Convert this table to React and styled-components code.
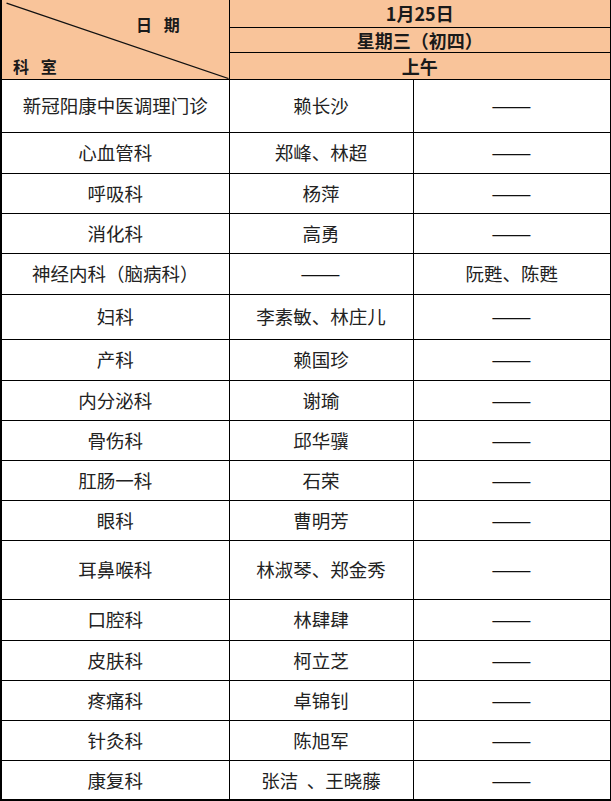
import React from "react";
import styled, { createGlobalStyle } from "styled-components";

const DASH = "——";

const rows = [
  { dept: "新冠阳康中医调理门诊", am: "赖长沙", pm: DASH, h: 53 },
  { dept: "心血管科", am: "郑峰、林超", pm: DASH, h: 41 },
  { dept: "呼吸科", am: "杨萍", pm: DASH, h: 40 },
  { dept: "消化科", am: "高勇", pm: DASH, h: 40 },
  { dept: "神经内科（脑病科）", am: DASH, pm: "阮甦、陈甦", h: 41 },
  { dept: "妇科", am: "李素敏、林庄儿", pm: DASH, h: 45 },
  { dept: "产科", am: "赖国珍", pm: DASH, h: 41 },
  { dept: "内分泌科", am: "谢瑜", pm: DASH, h: 40 },
  { dept: "骨伤科", am: "邱华骥", pm: DASH, h: 40 },
  { dept: "肛肠一科", am: "石荣", pm: DASH, h: 40 },
  { dept: "眼科", am: "曹明芳", pm: DASH, h: 40 },
  { dept: "耳鼻喉科", am: "林淑琴、郑金秀", pm: DASH, h: 59 },
  { dept: "口腔科", am: "林肆肆", pm: DASH, h: 41 },
  { dept: "皮肤科", am: "柯立芝", pm: DASH, h: 40 },
  { dept: "疼痛科", am: "卓锦钊", pm: DASH, h: 40 },
  { dept: "针灸科", am: "陈旭军", pm: DASH, h: 40 },
  { dept: "康复科", am: "张洁\u00a0\u00a0、王晓藤", pm: DASH, h: 40 },
];

// the dash in the CJK font is narrower than in the original, so it gets stretched
const renderValue = (v) => (v === DASH ? <Dash>{v}</Dash> : v);

const App = () => {
  return (
    <>
      <GlobalStyle />
      <Table>
        <colgroup>
          <col style={{ width: 228 }} />
          <col style={{ width: 184 }} />
          <col style={{ width: 198 }} />
        </colgroup>
        <thead>
          <HeadRow $h={27}>
            <CornerCell rowSpan={3}>
              <Diagonal viewBox="0 0 100 100" preserveAspectRatio="none">
                <line x1="2" y1="4" x2="100" y2="100" stroke="#111" strokeWidth="1.3" vectorEffect="non-scaling-stroke" />
              </Diagonal>
              <DateLabel>日 期</DateLabel>
              <DeptLabel>科 室</DeptLabel>
            </CornerCell>
            <HeadCell colSpan={2}>1月25日</HeadCell>
          </HeadRow>
          <HeadRow $h={25}>
            <HeadCell colSpan={2}>星期三（初四）</HeadCell>
          </HeadRow>
          <HeadRow $h={27}>
            <HeadCell colSpan={2}>上午</HeadCell>
          </HeadRow>
        </thead>
        <tbody>
          {rows.map((r, i) => (
            <Row key={i} $h={r.h}>
              <Cell>{r.dept}</Cell>
              <Cell>{renderValue(r.am)}</Cell>
              <Cell>{renderValue(r.pm)}</Cell>
            </Row>
          ))}
        </tbody>
      </Table>
    </>
  );
};

const GlobalStyle = createGlobalStyle`
  body {
    margin: 0;
    background: #fff;
    font-family: "Noto Sans CJK SC", "Noto Sans", sans-serif;
  }
`;

const Table = styled.table`
  width: 610px;
  table-layout: fixed;
  border-collapse: collapse;
  border-left: 2px solid #000;
  border-right: 2px solid #000;
  border-bottom: 2px solid #000;
  color: #222;
`;

const HeadRow = styled.tr`
  height: ${(p) => p.$h}px;
  background: #f9c49a;
`;

const HeadCell = styled.th`
  border: 1px solid #000;
  border-top: none;
  padding: 0;
  font-size: 18px;
  font-weight: 700;
  line-height: 1;
  text-align: center;
  color: #1a1a1a;
`;

const CornerCell = styled.th`
  position: relative;
  border-right: 1px solid #000;
  border-bottom: 1px solid #000;
  padding: 0;
  font-size: 16px;
  font-weight: 700;
  color: #1a1a1a;
`;

const Diagonal = styled.svg`
  position: absolute;
  inset: 0;
  width: 100%;
  height: 100%;
`;

const DateLabel = styled.span`
  position: absolute;
  top: 16px;
  left: 134px;
  word-spacing: 8px;
  line-height: 1;
`;

const DeptLabel = styled.span`
  position: absolute;
  top: 58px;
  left: 11px;
  word-spacing: 8px;
  line-height: 1;
`;

const Row = styled.tr`
  height: ${(p) => p.$h}px;
`;

const Cell = styled.td`
  border: 1px solid #000;
  padding: 0;
  font-size: 18.5px;
  line-height: 1;
  text-align: center;
  vertical-align: middle;
  white-space: nowrap;
`;

const Dash = styled.span`
  display: inline-block;
  transform: scaleX(1.3);
  color: #111;
`;

export default App;
